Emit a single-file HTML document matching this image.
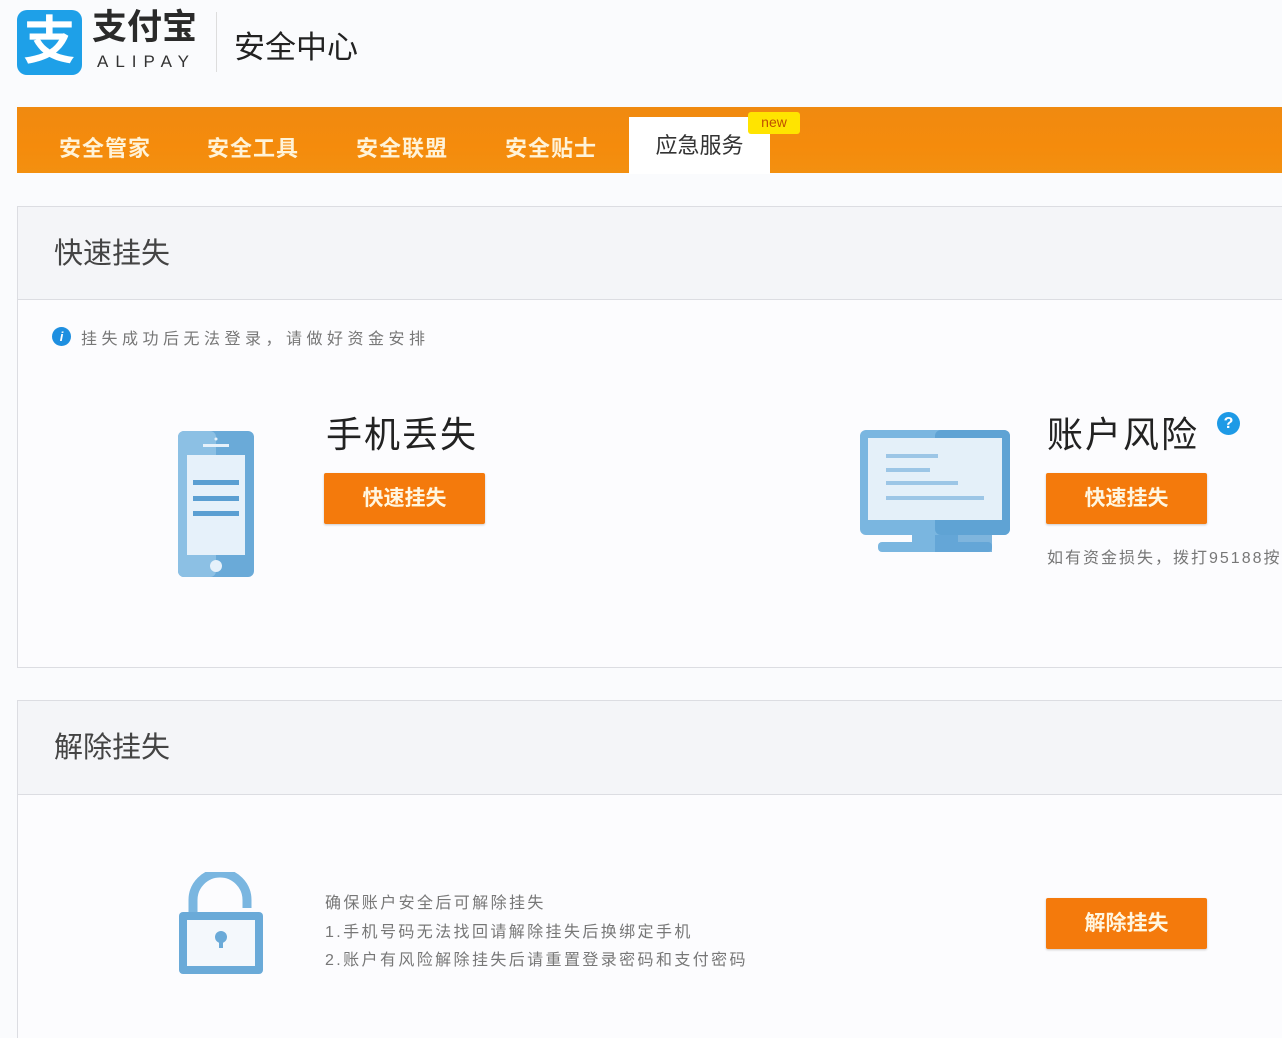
<!DOCTYPE html>
<html><head><meta charset="utf-8"><style>
*{margin:0;padding:0;box-sizing:border-box}
html,body{width:1282px;height:1038px;overflow:hidden}
body{background:#fafbfd;font-family:"Liberation Sans","Noto Sans CJK SC",sans-serif;position:relative;color:#333}
.abs{position:absolute}
.nav{left:17px;top:107px;width:1280px;height:66px;background:linear-gradient(#f08a10,#f58b0c 60%,#f39010);}
.nav span{position:absolute;top:24px;color:#fff3d8;font-size:22px;font-weight:bold;letter-spacing:1px}
.tab{left:629px;top:117px;width:141px;height:57px;background:#fff;font-size:22px;color:#333;text-align:center;line-height:58px}
.new{left:748px;top:112px;width:52px;height:22px;background:#ffe400;border-radius:3px;color:#c05000;font-size:14px;text-align:center;line-height:20px}
.panel{left:17px;width:1280px;border:1px solid #dcdde2;background:#fcfcfe}
.ph{position:absolute;left:0;top:0;right:0;background:#f4f5f8;border-bottom:1px solid #dcdde2;font-size:29px;color:#444;padding-left:36px}
.btn{position:absolute;width:161px;height:51px;background:#f47a0c;border-radius:2px;color:#fff6e0;font-size:21px;font-weight:bold;text-align:center;line-height:51px;box-shadow:0 1px 2px rgba(0,0,0,.2)}
.big{font-size:36px;color:#222;letter-spacing:2px}
.small{font-size:16px;color:#777}
</style></head><body>
<div class="abs" style="left:17px;top:10px;width:65px;height:65px;background:#1ea0e8;border-radius:10px;color:#fff;font-size:52px;line-height:64px;text-align:center;font-weight:bold">支</div>
<div class="abs" style="left:92px;top:8px;font-size:35px;line-height:40px;font-weight:bold;color:#2a2a2a">支付宝</div>
<div class="abs" style="left:97px;top:52px;font-size:17px;line-height:20px;color:#333;letter-spacing:7px">ALIPAY</div>
<div class="abs" style="left:216px;top:12px;width:1px;height:60px;background:#ddd"></div>
<div class="abs" style="left:234px;top:22px;font-size:31px;color:#222">安全中心</div>

<div class="abs nav"><span style="left:42px">安全管家</span><span style="left:190px">安全工具</span><span style="left:339px">安全联盟</span><span style="left:488px">安全贴士</span></div>
<div class="abs tab">应急服务</div>
<div class="abs new">new</div>

<div class="abs panel" style="top:206px;height:462px">
 <div class="ph" style="height:93px;line-height:95px">快速挂失</div>
</div>
<div class="abs" style="left:52px;top:327px;width:19px;height:19px;border-radius:50%;background:#1e8fe0;color:#fff;font-size:13px;font-style:italic;font-weight:bold;text-align:center;line-height:19px">i</div>
<div class="abs small" style="left:81px;top:325px;letter-spacing:4.5px">挂失成功后无法登录，请做好资金安排</div>

<svg class="abs" style="left:177px;top:430px" width="78" height="148"><rect x="1" y="1" width="76" height="146" rx="6" fill="#6aaad8"/><rect x="1" y="1" width="38" height="146" rx="6" fill="#8cc0e4"/><rect x="10" y="25" width="58" height="100" fill="#e6f1fa"/><rect x="16" y="50" width="46" height="5" fill="#5b9fd2"/><rect x="16" y="66" width="46" height="5" fill="#5b9fd2"/><rect x="16" y="81" width="46" height="5" fill="#5b9fd2"/><rect x="26" y="14" width="26" height="3" fill="#e6f1fa"/><circle cx="39" cy="9" r="1.5" fill="#e6f1fa"/><circle cx="39" cy="136" r="6" fill="#e6f1fa"/></svg>
<div class="abs big" style="left:326px;top:406px">手机丢失</div>
<div class="btn" style="left:324px;top:473px">快速挂失</div>

<svg class="abs" style="left:860px;top:430px" width="150" height="123"><rect x="0" y="0" width="150" height="105" rx="6" fill="#7ab6e0"/><rect x="75" y="0" width="75" height="105" rx="6" fill="#5fa3d4"/><rect x="8" y="8" width="134" height="82" fill="#e4f0f9"/><rect x="26" y="24" width="52" height="4" fill="#9cc6e6"/><rect x="26" y="38" width="44" height="4" fill="#9cc6e6"/><rect x="26" y="51" width="72" height="4" fill="#9cc6e6"/><rect x="26" y="66" width="98" height="4" fill="#9cc6e6"/><rect x="52" y="105" width="46" height="8" fill="#7ab6e0"/><rect x="18" y="112" width="114" height="10" rx="4" fill="#7ab6e0"/><rect x="75" y="105" width="57" height="17" fill="#5fa3d4" opacity=".8"/></svg>
<div class="abs big" style="left:1047px;top:406px">账户风险</div>
<div class="abs" style="left:1217px;top:412px;width:23px;height:23px;border-radius:50%;background:#1e9ae6;color:#fff;font-size:16px;font-weight:bold;text-align:center;line-height:23px">?</div>
<div class="btn" style="left:1046px;top:473px">快速挂失</div>
<div class="abs small" style="left:1047px;top:544px;white-space:nowrap;letter-spacing:2px">如有资金损失，拨打95188按</div>

<div class="abs panel" style="top:700px;height:340px">
 <div class="ph" style="height:94px;line-height:94px">解除挂失</div>
</div>
<svg class="abs" style="left:177px;top:872px" width="88" height="103"><path d="M16 44 V28 A27 27 0 0 1 70 28 V36" fill="none" stroke="#7ab6e0" stroke-width="9"/><rect x="2" y="40" width="84" height="62" rx="4" fill="#6aaad8"/><rect x="10" y="48" width="68" height="46" fill="#f4f8fc"/><circle cx="44" cy="65" r="6" fill="#6aaad8"/><rect x="42" y="66" width="4" height="10" fill="#6aaad8"/></svg>
<div class="abs small" style="left:325px;top:890px;line-height:28.5px;letter-spacing:2.4px;white-space:nowrap">确保账户安全后可解除挂失<br>1.手机号码无法找回请解除挂失后换绑定手机<br>2.账户有风险解除挂失后请重置登录密码和支付密码</div>
<div class="btn" style="left:1046px;top:898px">解除挂失</div>
</body></html>
